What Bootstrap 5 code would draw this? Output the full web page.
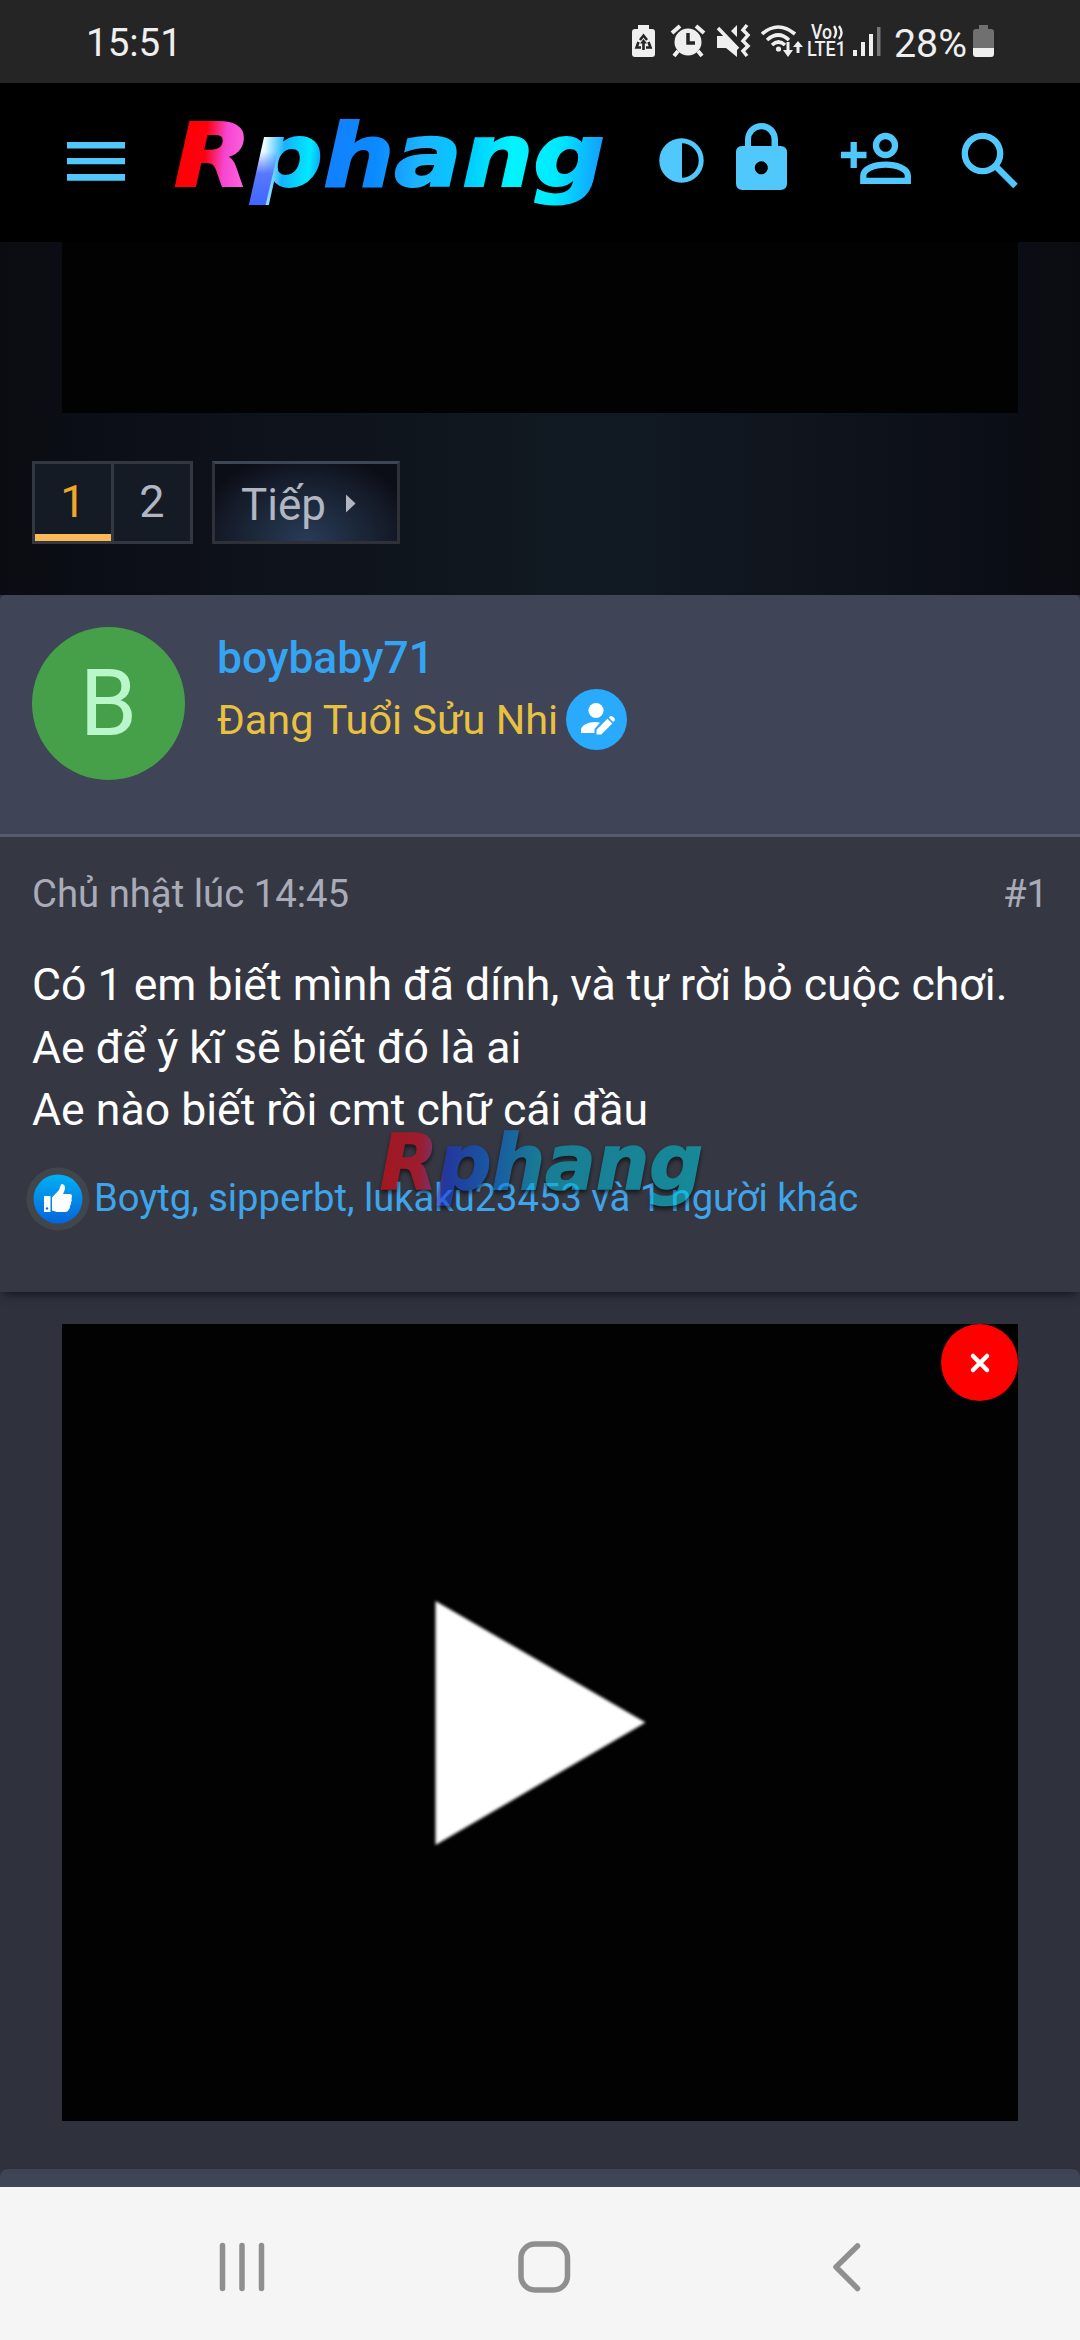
<!DOCTYPE html>
<html lang="vi">
<head>
<meta charset="utf-8">
<meta name="viewport" content="width=device-width, initial-scale=1">
<title>Rphang</title>
<link href="https://cdn.jsdelivr.net/npm/bootstrap@5.3.0/dist/css/bootstrap.min.css" rel="stylesheet">
<style>
body{font-family:Roboto,"Noto Sans",sans-serif;background:#2f323d;width:1080px;height:2340px;overflow:hidden;color:#fff}
svg{display:block;flex:none;overflow:visible}
.statusbar{height:83px;background:#252525;color:#efefef;padding-left:86px;flex:none}
.statusbar .clock{font-size:38.500px;line-height:85px}
.volte{font:500 20px/20px Roboto,sans-serif}
.apphead{height:159px;background:#000;flex:none}
.toparea{height:353px;flex:none;background:linear-gradient(90deg,#0b0c11 0,#0b0e16 8%,#0f131b 28%,#10171f 45%,#111a23 55%,#10151e 72%,#0b0e16 92%,#0b0c11 100%);padding:0 62px 0 32px}
.clip-top{height:171px;margin-left:30px;width:956px;background:#020202}
.pager{margin-top:48px;height:83px;border:3px solid #33373f;width:161px;background:#151b25}
.pager a,.nextbtn{font-size:45px;color:#b1b6c2;text-decoration:none}
.pager .cur{color:#f0a829;width:76px;border-bottom:7px solid #f9b958;line-height:76px;height:77px}
.pager .oth{border-left:3px solid #33373f;width:79px;line-height:76px}
.nextbtn{margin:48px 0 0 19px;width:188px;height:83px;border:3px solid #2e3138;border-top-color:#3c4655;background:radial-gradient(ellipse 62% 115% at 50% 100%,#293b57 0,#1c293b 45%,#151b29 75%,#0c0e17 100%);padding-left:26px}
.nextbtn span{line-height:82px;font-size:44px}
.posthead{height:242px;background:#3f4456;border-bottom:3px solid #565c6b;border-radius:5px 5px 0 0;padding:32px;gap:32px;flex:none}
.ava{width:153px;height:153px;background:#46a049;color:#b9f6ca;font-size:92px;line-height:153px}
.uname{font-size:44.300px;line-height:62px;font-weight:500;color:#35a4f3}
.utitle{font-size:41.400px;line-height:63px;color:#e9c140;height:63px}
.postbody{height:455px;background:#353842;padding:31px 32px 0;box-shadow:0 7px 8px -4px rgba(15,17,25,.8);flex:none;z-index:1}
.meta{font-size:38.300px;line-height:52px;color:#a9acb8;height:52px}
.msg{margin-top:34px;font-size:44.600px;line-height:62.700px;white-space:nowrap}
.likes{margin:24px 0 0 -6px;height:66px;color:#3fa5ea;font-size:38.150px;white-space:nowrap}
.wmark{left:380px;top:282px;opacity:.58;filter:drop-shadow(0 3px 2px #000)}
.clipwrap{padding:32px 62px 48px;height:877px;flex:none}
.clip{height:797px;background:#020202}
.tri{filter:blur(1.500px)}
.closer{width:77px;height:77px;right:0;top:0;background:#f00}
.nextpost{height:18px;background:linear-gradient(#3f4352,#3e475a);border-radius:8px 8px 0 0;flex:none}
.sysnav{height:153px;background:#f5f5f5;flex:none}
</style>
<script src="https://cdn.jsdelivr.net/npm/bootstrap@5.3.0/dist/js/bootstrap.bundle.min.js"></script>
</head>
<body class="d-flex flex-column m-0">
<div class="statusbar d-flex">
  <span class="clock">15:51</span>
  <svg class="ms-auto" width="454" height="83" viewBox="626 0 454 83" fill="#efefef">
    <!-- battery saver -->
    <path fill-rule="evenodd" d="M638 25h11v4h3q3 0 3 3v22q0 3-3 3h-17q-3 0-3-3V32q0-3 3-3h3z"/>
    <path d="M640 40l3.500-4.500L647 40M648.500 42l2 5.500H646M641 47.500h-4.500l2-5.500" fill="none" stroke="#252525" stroke-width="2.600"/><path d="M643.500 39l3.500 4.500h-2.200V50h-2.600v-6.500H640z" fill="#252525"/>
    <!-- alarm -->
    <circle cx="688" cy="42" r="13.500"/><path d="M672 33l8-7M704 33l-8-7M678 51l-4 5M698 51l4 5" stroke="#efefef" stroke-width="4"/><path d="M688 33v10h7" fill="none" stroke="#252525" stroke-width="3.500"/>
    <!-- mute with vibration -->
    <path d="M717 36h7l13 13v8l-11-9h-9zM737 25v12l-6-6z"/><path d="M718 28l20 21" stroke="#efefef" stroke-width="3.500"/><path d="M747 25l-4 5 5 5-5 6 5 5-5 5 4 5" fill="none" stroke="#efefef" stroke-width="3.500"/>
    <!-- wifi -->
    <g fill="none" stroke="#efefef" stroke-width="3.600"><path d="M762 34q16-14 33 0M767 40q11.500-10 22 0M772 45q6.500-6 13 0"/><path d="M788 42v11M798 53V43" stroke-width="3"/></g><circle cx="778.500" cy="49" r="2.600"/><path d="M783 50h10l-5 7zM793 47h10l-5-6z"/>
    <text class="volte" x="811" y="38.500" textLength="21" lengthAdjust="spacingAndGlyphs">Vo</text>
    <path d="M834 26q4 6 0 12M839 26q5 7 0 13" fill="none" stroke="#efefef" stroke-width="2.400"/>
    <text class="volte" x="807" y="56" textLength="39" lengthAdjust="spacingAndGlyphs">LTE1</text>
    <path d="M853 50h4v6h-4zM861 42h4v14h-4zM869 34h4v22h-4z"/><path d="M877 27h3.500v29H877z" fill="#777"/>
    <text x="894" y="56.500" font-size="39.500" textLength="73" lengthAdjust="spacingAndGlyphs" font-family="Roboto">28%</text>
    <path d="M979 25h9v4h3q3 0 3 3v17h-21V32q0-3 3-3h3z" fill="#707070"/><path d="M973 48h21v6q0 3-3 3h-15q-3 0-3-3z"/>
  </svg>
</div>

<header class="apphead">
  <svg width="1080" height="159" viewBox="0 83 1080 159" fill="#50c8fc">
    <defs>
      <linearGradient id="lg1" gradientUnits="userSpaceOnUse" x1="170" y1="150" x2="606" y2="190">
        <stop offset="0" stop-color="#f00"/><stop offset=".08" stop-color="#ff0010"/><stop offset=".125" stop-color="#f545cf"/><stop offset=".17" stop-color="#ff60e0"/><stop offset=".19" stop-color="#fff"/><stop offset=".215" stop-color="#e8f8ff"/><stop offset=".26" stop-color="#12b4ff"/><stop offset=".32" stop-color="#02e8ff"/><stop offset=".36" stop-color="#1380ff"/><stop offset=".47" stop-color="#0b8aff"/><stop offset=".57" stop-color="#1cb4ff"/><stop offset=".68" stop-color="#0cf"/><stop offset=".78" stop-color="#02f4ff"/><stop offset=".88" stop-color="#00eaff"/><stop offset="1" stop-color="#1594ff"/>
      </linearGradient>
      <linearGradient id="lg2" gradientUnits="userSpaceOnUse" x1="0" y1="152" x2="0" y2="206"><stop offset="0" stop-color="#4b76ff" stop-opacity="0"/><stop offset=".4" stop-color="#5a78ff"/><stop offset="1" stop-color="#3d66ff"/></linearGradient>
      <pattern id="brandfill" patternUnits="userSpaceOnUse" x="0" y="0" width="1080" height="260">
        <path d="M0 0h1080v260H0z" fill="url(#lg1)"/><path d="M252 152h26l-14 60h-26z" fill="url(#lg2)"/>
      </pattern>
    </defs>
    <path d="M67 142h58v6.500H67zM67 158h58v6.200H67zM67 174h58v6.800H67z"/>
    <text x="174" y="186" font-family="DejaVu Sans" font-weight="bold" font-style="italic" font-size="87" textLength="431" lengthAdjust="spacingAndGlyphs" fill="url(#brandfill)" stroke="url(#brandfill)" stroke-width="2">Rphang</text>
    <circle cx="681.500" cy="160.500" r="19.700" fill="none" stroke="#50c8fc" stroke-width="5"/><path d="M682 139a21.500 21.500 0 0 0 0 43z"/>
    <path fill-rule="evenodd" d="M742 146h3v-6.500a16.500 16.500 0 0 1 33 0V146h2.500q6.500 0 6.500 6.500v31q0 6.500-6.500 6.500h-38q-6.500 0-6.500-6.500v-31q0-6.500 6-6.500zm9 0h20.500v-6.500a10.200 10.200 0 0 0-20.500 0zm10.300 15.300a6.500 6.500 0 1 0 .01 0z"/>
    <g fill="none" stroke="#50c8fc" stroke-width="6.300"><path d="M841 155h25.500M853.700 142v26M863.300 180.800h44.500v-5.300c0-6.500-11-10.800-22.200-10.800s-22.300 4.300-22.300 10.800z"/><circle cx="885.500" cy="145.500" r="9.500"/><circle cx="982.500" cy="153.500" r="17.700"/><path d="M996 166.500l19.500 19.500"/></g>
  </svg>
</header>

<section class="toparea">
  <div class="clip-top"></div>
  <div class="d-flex">
    <nav class="pager d-flex text-center"><a class="cur" href="#">1</a><a class="oth" href="#">2</a></nav>
    <a class="nextbtn d-flex" href="#"><span>Tiếp</span><svg class="ms-3" width="16" height="77" viewBox="0 0 16 77" fill="#b1b6c2"><path d="M4 30.500l9.500 9-9.500 9z"/></svg></a>
  </div>
</section>

<article class="d-flex flex-column flex-shrink-0">
  <header class="posthead d-flex">
    <div class="ava rounded-circle text-center">B</div>
    <div>
      <div class="uname">boybaby71</div>
      <div class="utitle d-flex gap-2"><span class="title-txt">Đang Tuổi Sửu Nhi</span>
        <svg width="61" height="61" viewBox="0 0 61 61" fill="#fff"><circle cx="30.500" cy="30.500" r="30.500" fill="#29aafd"/><circle cx="30" cy="21.500" r="7.600"/><path d="M15 44v-3c0-5 8-8 14-8q3 0 5 .8L28.500 40v4zM30.500 45.500v-4.800l11-11 4.800 4.800-11 11zM42.800 28.600l1.500-1.500q1.500-.5 2.800 1l1.500 1.500q.7 1.200 0 2.200L47 33z"/></svg>
      </div>
    </div>
  </header>
  <div class="postbody position-relative">
    <div class="meta d-flex justify-content-between"><span>Chủ nhật lúc 14:45</span><span>#1</span></div>
    <div class="msg">Có 1 em biết mình đã dính, và tự rời bỏ cuộc chơi.<br>Ae để ý kĩ sẽ biết đó là ai<br>Ae nào biết rồi cmt chữ cái đầu</div>
    <div class="likes d-flex align-items-center">
      <svg width="64" height="64" viewBox="0 0 64 64"><defs><linearGradient id="lk" x2="0" y2="1"><stop stop-color="#02b0f3"/><stop offset="1" stop-color="#0565db"/></linearGradient></defs><circle cx="32" cy="32" r="31.500" fill="#41464c"/><circle cx="32" cy="32" r="24.500" fill="url(#lk)"/><path fill="#fff" d="M18 29h6.500v16H18zM26 30.500l7-7.500 2-5.500q1.500-1.500 3.500 1 1.500 3-1.500 8.500h7q3 .8 1.500 4.500.7 2-.4 3.500.4 2-1 3.500.3 3-1.600 4.500-.5 2-3.500 2H31l-5-1.500z"/><circle cx="21" cy="41.500" r="1.200" fill="#0872db"/></svg>
      <span class="like-names ps-1">Boytg, sipperbt, lukaku23453 và 1 người khác</span>
    </div>
    <svg class="wmark position-absolute" width="324" height="95" viewBox="0 0 324 95">
      <defs><linearGradient id="lg3" gradientUnits="userSpaceOnUse" x1="0" y1="60" x2="320" y2="80"><stop offset="0" stop-color="#f00009"/><stop offset=".12" stop-color="#e60a22"/><stop offset=".17" stop-color="#a03390"/><stop offset=".2" stop-color="#1737e0"/><stop offset=".34" stop-color="#066fe8"/><stop offset=".5" stop-color="#05afd0"/><stop offset="1" stop-color="#02c4d8"/></linearGradient></defs>
      <text x="0" y="70" font-family="DejaVu Sans" font-weight="bold" font-style="italic" font-size="76" textLength="323" lengthAdjust="spacingAndGlyphs" fill="url(#lg3)" stroke="url(#lg3)" stroke-width="1.500">Rphang</text>
    </svg>
  </div>
</article>

<section class="clipwrap">
  <div class="clip position-relative d-flex">
    <svg width="956" height="797" viewBox="62 1324 956 797"><path class="tri" d="M435.500 1601v244l210-122.500z" fill="#fff"/></svg>
    <div class="closer position-absolute rounded-circle d-flex align-items-center justify-content-center"><svg width="22" height="22" viewBox="0 0 22 22" stroke="#fff" stroke-width="4.500" stroke-linecap="round"><path d="M4 4l14 14M18 4l-14 14"/></svg></div>
  </div>
</section>
<div class="nextpost"></div>
<nav class="sysnav">
  <svg width="1080" height="153" viewBox="0 2187 1080 153" fill="none" stroke="#8f8f8f" stroke-width="5.500" stroke-linecap="round" stroke-linejoin="round"><path d="M222.500 2245.500v43M242 2245.500v43M261.500 2245.500v43M857.500 2246l-21.500 21 21.500 21.500"/><rect x="521" y="2244" width="46.500" height="46" rx="14"/></svg>
</nav>
</body>
</html>
